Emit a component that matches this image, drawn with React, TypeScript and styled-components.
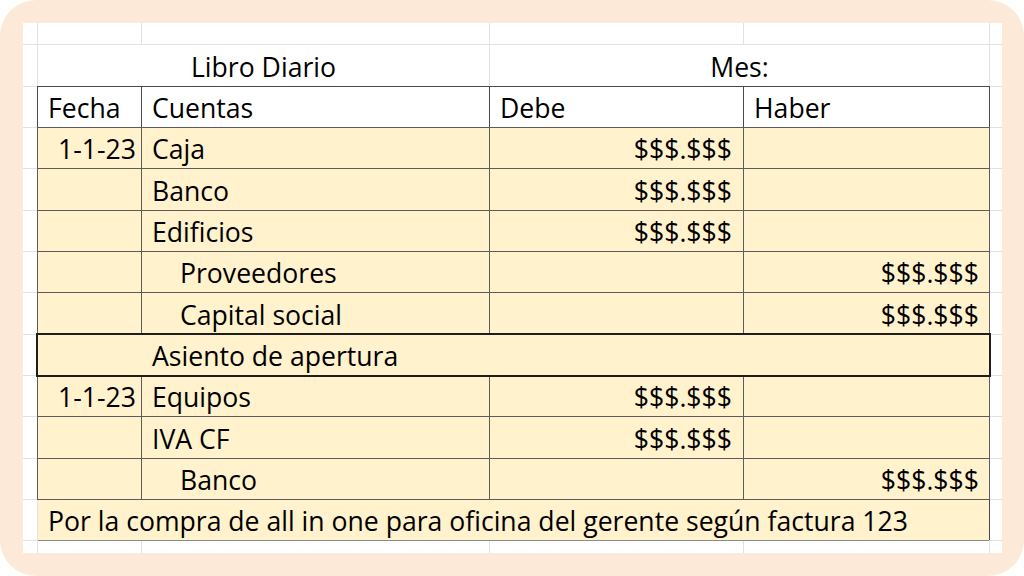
import React from "react";
import styled, { createGlobalStyle, css } from "styled-components";

const Global = createGlobalStyle`
  html, body { margin: 0; padding: 0; background: #ffffff; }
  body { font-family: "Open Sans", Lato, sans-serif; }
`;

const Frame = styled.div`
  width: 1024px;
  height: 576px;
  box-sizing: border-box;
  padding: 23px 22px 23px 23px;
  background: #fde9d8;
  border-radius: 36px;
`;

const Sheet = styled.div`
  display: grid;
  grid-template-columns: 14px 103px 347px 253px 245px 12px;
  grid-template-rows: 21px repeat(4, 41px 40px 40px) 12px;
  gap: 1px;
  height: 530px;
  background: #e2e2e2;
`;

type Frame = "none" | "thin" | "header" | "bold" | "note";

const frames: Record<Frame, ReturnType<typeof css> | string> = {
  none: "",
  thin: css`outline: 1px solid #5c5c5c;`,
  header: css`outline: 1px solid #4a4a4a;`,
  bold: css`
    outline: 2px solid #1e1e1e;
    position: relative;
    z-index: 1;
  `,
  note: css`box-shadow: 1px 0 0 #4a4a4a, 0 1px 0 #8a8a8a;`,
};

const Cell = styled.div<{
  $fill?: boolean;
  $frame?: Frame;
  $align?: "left" | "right" | "center";
  $indent?: boolean;
  $span?: number;
  $padR?: number;
}>`
  grid-column: span ${(p) => p.$span ?? 1};
  background: ${(p) => (p.$fill ? "#fff2cc" : "#ffffff")};
  display: flex;
  align-items: flex-end;
  justify-content: ${(p) =>
    p.$align === "right" ? "flex-end" : p.$align === "center" ? "center" : "flex-start"};
  padding: 0 ${(p) => p.$padR ?? 10}px 5px ${(p) => (p.$indent ? 38 : 10)}px;
  box-sizing: border-box;
  font-size: 26.6px;
  line-height: 1;
  color: #000;
  white-space: nowrap;
  min-width: 0;
  ${(p) => frames[p.$frame ?? "none"]}
`;

const Edge = styled.div`
  background: #ffffff;
`;

type Entry = {
  date?: string;
  account: string;
  indent?: boolean;
  debe?: string;
  haber?: string;
};

const AMT = "$$$.$$$";

const first: Entry[] = [
  { date: "1-1-23", account: "Caja", debe: AMT },
  { account: "Banco", debe: AMT },
  { account: "Edificios", debe: AMT },
  { account: "Proveedores", indent: true, haber: AMT },
  { account: "Capital social", indent: true, haber: AMT },
];

const second: Entry[] = [
  { date: "1-1-23", account: "Equipos", debe: AMT },
  { account: "IVA CF", debe: AMT },
  { account: "Banco", indent: true, haber: AMT },
];

function EntryRow({ e }: { e: Entry }) {
  return (
    <>
      <Edge />
      <Cell $fill $frame="thin" $align="right" $padR={5}>
        {e.date ?? ""}
      </Cell>
      <Cell $fill $frame="thin" $indent={e.indent}>
        {e.account}
      </Cell>
      <Cell $fill $frame="thin" $align="right" $padR={11}>
        {e.debe ?? ""}
      </Cell>
      <Cell $fill $frame="thin" $align="right" $padR={10}>
        {e.haber ?? ""}
      </Cell>
      <Edge />
    </>
  );
}

function BlankRow() {
  return (
    <>
      {Array.from({ length: 6 }).map((_, i) => (
        <Edge key={i} />
      ))}
    </>
  );
}

export default function App() {
  return (
    <>
      <Global />
      <Frame>
        <Sheet>
          <BlankRow />

          <Edge />
          <Cell $span={2} $align="center">
            Libro Diario
          </Cell>
          <Cell $span={2} $align="center">
            Mes:
          </Cell>
          <Edge />

          <Edge />
          <Cell $frame="header">Fecha</Cell>
          <Cell $frame="header">Cuentas</Cell>
          <Cell $frame="header">Debe</Cell>
          <Cell $frame="header">Haber</Cell>
          <Edge />

          {first.map((e, i) => (
            <EntryRow key={"a" + i} e={e} />
          ))}

          <Edge />
          <Cell $span={4} $fill $frame="bold">
            <span style={{ paddingLeft: 104 }}>Asiento de apertura</span>
          </Cell>
          <Edge />

          {second.map((e, i) => (
            <EntryRow key={"b" + i} e={e} />
          ))}

          <Edge />
          <Cell $span={4} $fill $frame="note">
            Por la compra de all in one para oficina del gerente según factura 123
          </Cell>
          <Edge />

          <BlankRow />
        </Sheet>
      </Frame>
    </>
  );
}
